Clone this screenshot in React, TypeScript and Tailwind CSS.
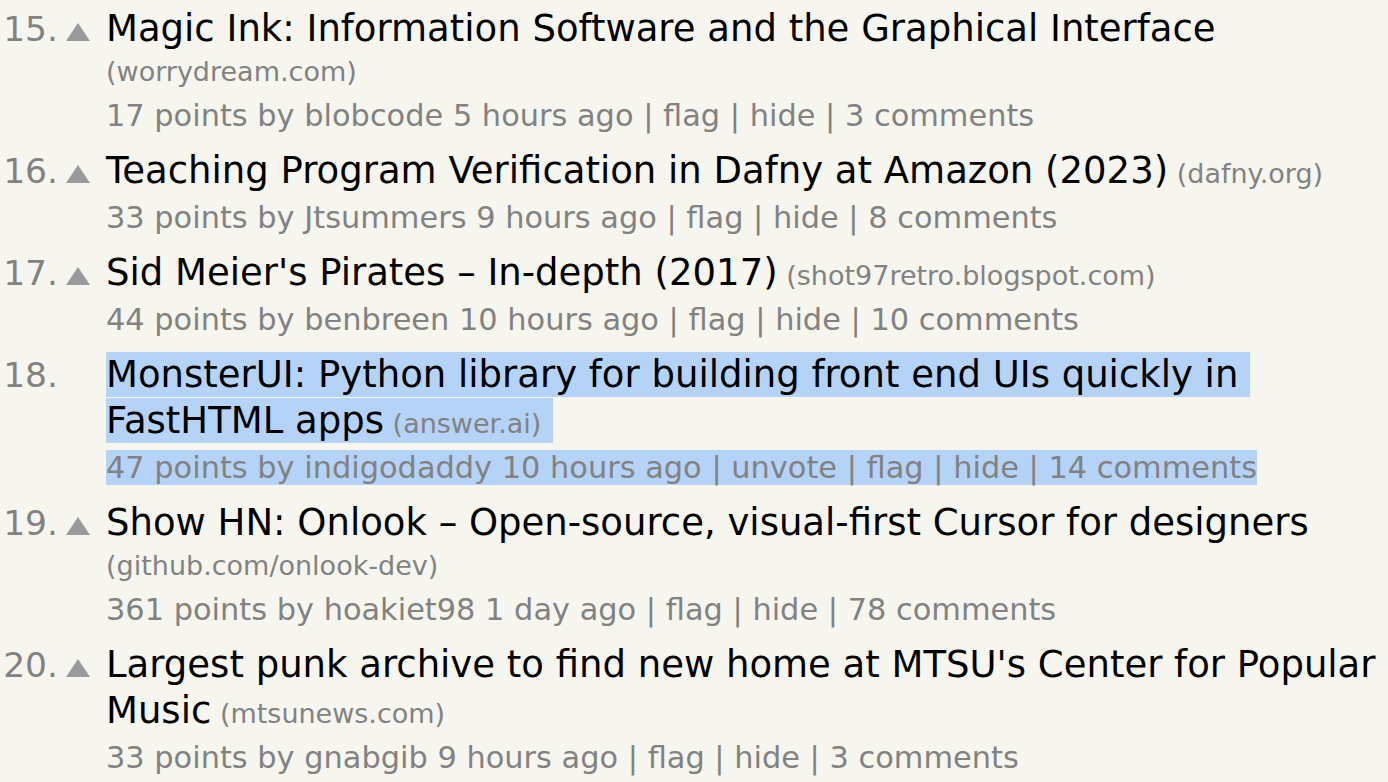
import React from "react";

interface Story {
  rank: number;
  title: string;
  site: string;
  points: number;
  user: string;
  age: string;
  comments: number;
  voted?: boolean;
}

const stories: Story[] = [
  { rank: 15, title: "Magic Ink: Information Software and the Graphical Interface", site: "worrydream.com", points: 17, user: "blobcode", age: "5 hours ago", comments: 3 },
  { rank: 16, title: "Teaching Program Verification in Dafny at Amazon (2023)", site: "dafny.org", points: 33, user: "Jtsummers", age: "9 hours ago", comments: 8 },
  { rank: 17, title: "Sid Meier's Pirates – In-depth (2017)", site: "shot97retro.blogspot.com", points: 44, user: "benbreen", age: "10 hours ago", comments: 10 },
  { rank: 18, title: "MonsterUI: Python library for building front end UIs quickly in\u00a0 FastHTML apps", site: "answer.ai", points: 47, user: "indigodaddy", age: "10 hours ago", comments: 14, voted: true },
  { rank: 19, title: "Show HN: Onlook – Open-source, visual-first Cursor for designers", site: "github.com/onlook-dev", points: 361, user: "hoakiet98", age: "1 day ago", comments: 78 },
  { rank: 20, title: "Largest punk archive to find new home at MTSU's Center for Popular Music", site: "mtsunews.com", points: 33, user: "gnabgib", age: "9 hours ago", comments: 3 },
];

const VoteArrow = () => (
  <svg width="24" height="18" viewBox="0 0 24 18" className="block">
    <polygon points="12,0 24,18 0,18" fill="#9a9a9a" />
  </svg>
);

const StoryRow = ({ story }: { story: Story }) => {
  const hl = story.voted ? "bg-[#b4d3f7]" : "";
  return (
    <div className="flex">
      <div className="w-[58px] shrink-0 text-right text-[34.5px] leading-[46px] text-[#828282]">
        {story.rank}.
      </div>
      <div className="w-[48px] shrink-0 pl-[8px] pt-[17px]">
        {!story.voted && <VoteArrow />}
      </div>
      <div className="flex-1 pr-[8px]">
        {/* titleline: small strut so a line holding only the site is shorter */}
        <div className="text-[27px] leading-[40px] text-[#828282]">
          <span className={story.voted ? `${hl} pt-[10px] pb-[4px] pr-[12px]` : ""}>
            <span className="text-[37px] leading-[45px] text-black">{story.title}</span>{" "}
            <span>({story.site})</span>
          </span>
        </div>
        <div className="mt-[5px] text-[30.4px] leading-[38px] text-[#828282]">
          <span className={hl}>
            {story.points} points by {story.user} {story.age} |{" "}
            {story.voted && <>unvote | </>}flag | hide | {story.comments} comments
          </span>
        </div>
      </div>
    </div>
  );
};

export default function App() {
  return (
    <div className="min-h-screen w-full overflow-hidden bg-[#f6f6ef] pt-[6px] font-['DejaVu_Sans',Verdana,sans-serif]">
      <div className="flex flex-col gap-[13px]">
        {stories.map((s) => (
          <StoryRow key={s.rank} story={s} />
        ))}
      </div>
    </div>
  );
}
